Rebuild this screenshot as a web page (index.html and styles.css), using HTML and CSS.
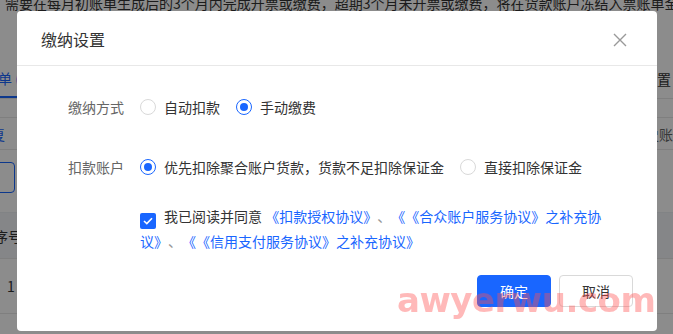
FILE: index.html
```html
<!DOCTYPE html>
<html lang="zh-CN">
  <head>
    <meta charset="UTF-8" />
    <meta name="viewport" content="width=device-width, initial-scale=1.0" />
    <title>缴纳设置</title>
    <link rel="stylesheet" href="styles.css">
  </head>
  <body>
    <!-- page behind the dialog -->
    <div class="page">
      <div class="notice">
        需要在每月初账单生成后的3个月内完成开票或缴费，超期3个月未开票或缴费，将在货款账户冻结入票账单金额的30%
        <a class="notice-link">查看详情</a>
      </div>

      <div class="tabs">
        <div class="tab active">单 (2)</div>
        <div class="tab-right">缴纳设置</div>
      </div>

      <div class="filter">
        <span class="filter-left">复</span>
        <span class="filter-right">历史账单</span>
      </div>

      <div class="ghost-btn"></div>

      <div class="table">
        <div class="thead"><span class="cell-first">序号</span></div>
        <div class="trow"><span class="cell-num">1</span></div>
      </div>
    </div>

    <div class="mask"></div>

    <div class="modal">
      <div class="modal-header">
        <div class="modal-title">缴纳设置</div>
        <svg class="modal-close" width="14" height="14" viewBox="0 0 14 14">
          <path d="M1 1 L13 13 M13 1 L1 13" stroke="#999" stroke-width="1.4" fill="none" />
        </svg>
      </div>

      <div class="modal-body">
        <div class="form-row row-pay">
          <div class="form-label">缴纳方式</div>
          <div class="radio-group">
            <label class="radio"><span class="radio-dot"></span>自动扣款</label>
            <label class="radio checked"><span class="radio-dot"></span>手动缴费</label>
          </div>
        </div>

        <div class="form-row row-account">
          <div class="form-label">扣款账户</div>
          <div class="radio-group">
            <label class="radio checked"><span class="radio-dot"></span>优先扣除聚合账户货款，货款不足扣除保证金</label>
            <label class="radio"><span class="radio-dot"></span>直接扣除保证金</label>
          </div>
        </div>

        <div class="form-row row-agree">
          <div class="form-label"></div>
          <div class="agree">
            <span class="checkbox">
              <svg width="10" height="8" viewBox="0 0 10 8">
                <path d="M1 4 L3.8 6.6 L9 1.2" stroke="#fff" stroke-width="1.6" fill="none" />
              </svg>
            </span>我已阅读并同意 <a class="link">《扣款授权协议》</a><span class="sep">、</span><a class="link">《《合众账户服务协议》之补充协议》</a><span class="sep">、</span><a class="link">《《信用支付服务协议》之补充协议》</a>
          </div>
        </div>
      </div>

      <div class="modal-footer">
        <button class="btn btn-primary">确定</button>
        <button class="btn">取消</button>
      </div>
    </div>

    <div class="watermark">awyerwu.com</div>
  </body>
</html>
```

FILE: styles.css
```css
body {
  margin: 0;
  font-family: "Noto Sans CJK SC", "Noto Sans", sans-serif;
  font-size: 14px;
  color: #333;
  background: #fff;
  text-spacing-trim: space-all;
}
.page {
  width: 673px;
  height: 334px;
  overflow: hidden;
  background: #fff;
}
.notice {
  margin-top: -7px;
  padding-left: 5px;
  line-height: 20px;
  white-space: nowrap;
  color: #333;
}
.notice-link {
  color: #1966ff;
}
.tabs {
  margin-top: 47px;
  height: 38px;
  border-bottom: 1px solid #e8e8e8;
  display: flex;
  justify-content: space-between;
  align-items: stretch;
}
.tab {
  margin-left: -2px;
  padding-right: 20px;
  display: flex;
  align-items: center;
  color: #1966ff;
  border-bottom: 2px solid #1966ff;
}
.tab-right {
  display: flex;
  align-items: center;
  margin-right: 2px;
  color: #333;
}
.filter {
  margin-top: 18px;
  height: 31px;
  border-top: 1px solid #e8e8e8;
  border-bottom: 1px solid #e8e8e8;
  display: flex;
  justify-content: space-between;
  align-items: center;
}
.filter-left {
  margin-left: -9px;
  color: #1966ff;
}
.filter-right {
  margin-right: -14px;
  color: #666;
}
.ghost-btn {
  margin-top: 12px;
  margin-left: -45px;
  width: 58px;
  height: 29px;
  border: 1px solid #1966ff;
  border-radius: 4px;
}
.table {
  margin-top: 19px;
}
.thead {
  height: 45px;
  background: #f3f5f8;
  border-top: 1px solid #eceef2;
  border-bottom: 1px solid #e8e8e8;
  display: flex;
  align-items: center;
}
.cell-first {
  margin-left: -6px;
}
.trow {
  height: 54px;
  border-bottom: 1px solid #e8e8e8;
  display: flex;
  align-items: center;
}
.cell-num {
  margin-left: 7px;
}

.mask {
  position: fixed;
  inset: 0;
  background: rgba(0, 0, 0, 0.45);
}

.modal {
  position: absolute;
  left: 17px;
  top: 11px;
  width: 640px;
  background: #fff;
  border-radius: 4px;
}
.modal-header {
  height: 54px;
  padding: 0 30px 0 24px;
  border-bottom: 1px solid #e8e8e8;
  display: flex;
  align-items: center;
  justify-content: space-between;
}
.modal-title {
  font-size: 16px;
  line-height: 22px;
  color: #333;
  padding-top: 2px;
}
.modal-close {
  margin-top: 3px;
}
.modal-body {
  padding: 25px 51px 0;
}
.form-row {
  display: flex;
  align-items: center;
  min-height: 32px;
}
.row-pay {
  margin-bottom: 28px;
}
.row-account {
  margin-bottom: 21px;
}
.row-agree {
  align-items: flex-start;
}
.form-label {
  width: 56px;
  margin-right: 16px;
  color: #666;
  flex-shrink: 0;
}
.radio-group {
  display: flex;
  gap: 16px;
}
.radio {
  display: flex;
  align-items: center;
  gap: 8px;
  color: #333;
  line-height: 22px;
}
.radio-dot {
  width: 14px;
  height: 14px;
  border: 1px solid #d9d9d9;
  border-radius: 50%;
  display: flex;
  align-items: center;
  justify-content: center;
}
.radio.checked .radio-dot {
  border-color: #1966ff;
}
.radio.checked .radio-dot::after {
  content: "";
  width: 8px;
  height: 8px;
  border-radius: 50%;
  background: #1966ff;
}
.agree {
  line-height: 24px;
  color: #333;
  width: 466px;
}
.checkbox {
  display: inline-flex;
  align-items: center;
  justify-content: center;
  width: 16px;
  height: 16px;
  background: #1966ff;
  border-radius: 2px;
  vertical-align: -3px;
  margin-right: 8px;
}
.link {
  color: #1966ff;
}
.sep {
  color: #999;
}
.modal-footer {
  margin-top: 22px;
  padding: 0 24px 24px;
  display: flex;
  justify-content: flex-end;
  gap: 8px;
}
.btn {
  width: 74px;
  height: 32px;
  border: 1px solid #d9d9d9;
  border-radius: 4px;
  background: #fff;
  color: #333;
  font-family: inherit;
  font-size: 14px;
  padding: 0;
}
.btn-primary {
  background: #1966ff;
  border-color: #1966ff;
  color: #fff;
}

.watermark {
  position: absolute;
  left: 397px;
  top: 283px;
  font-family: "DejaVu Sans", sans-serif;
  font-weight: bold;
  font-size: 34px;
  line-height: 34px;
  color: rgba(255, 80, 80, 0.4);
  letter-spacing: -0.5px;
  white-space: nowrap;
}
```
